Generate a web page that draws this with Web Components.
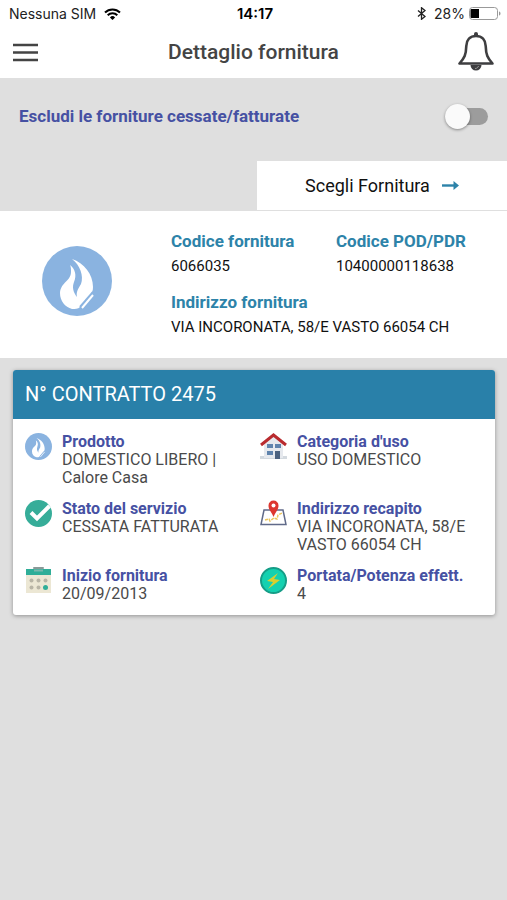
<!DOCTYPE html>
<html lang="it">
<head>
<meta charset="utf-8">
<meta name="viewport" content="width=device-width, initial-scale=1">
<title>Dettaglio fornitura</title>
<style>
  html { height: 100%; }
  body { margin: 0; min-height: 100%; background: #dfdfdf; font-family: Roboto, "Liberation Sans", sans-serif; color: #111; }
</style>
</head>
<body>
<supply-page></supply-page>

<script>
const flame = `
  <circle cx="35" cy="35" r="35" fill="#8ab3e0"/>
  <path fill="#fff" d="M30 13 C42 17 51 28 51 41 C51 45 50 47 47 50 L38 61 C36 63 33 63 30 63 C23 61 18 55 18 47 C19 36 29 35 29 26 C29 23 29 21 28 19 C33 23 35 29 32 36 C30 41 31 46 35 51 C34 46 36 43 39 38 C42 30 38 19 30 13 Z"/>
  <path d="M51 46 L38 61" stroke="#8ab3e0" stroke-width="2"/>
  <path d="M51 49 L40 62" stroke="#fff" stroke-width="2"/>
`

const icons = {
  flame: { box: '0 0 70 70', body: flame },
  check: { box: '0 0 27 27', body: `
    <circle cx="13.5" cy="13.5" r="13.5" fill="#36ad99"/>
    <path d="M6 12.5l6 6L24.5 6" fill="none" stroke="#fff" stroke-width="4"/>` },
  calendar: { box: '0 0 27 27', body: `
    <path fill="#ece7d4" d="M1 7h25v19H1z"/>
    <path fill="#2fae98" d="M1 2h25v6H1z"/>
    <rect x="8" y="0" width="11" height="2" rx="1" fill="#8a9a98"/>
    <path d="M9 3.5h9" stroke="#79b8ad" stroke-width="2"/>
    <g fill="#b9b5a6"><circle cx="6.5" cy="13.5" r="2"/><circle cx="13.5" cy="13.5" r="2"/><circle cx="20.5" cy="13.5" r="2"/><circle cx="6.5" cy="20.5" r="2"/><circle cx="13.5" cy="20.5" r="2"/></g>
    <circle cx="20.5" cy="20.5" r="2.5" fill="#2fae98"/>` },
  house: { box: '0 0 27 27', body: `
    <path fill="#d3d9df" d="M0 23h27v3H0z"/>
    <path fill="#e6e9ee" d="M4 11l9.5-9L23 11v14H4z"/>
    <path d="M1 12L13.5 2 26 12" fill="none" stroke="#b92b2f" stroke-width="3"/>
    <path fill="#5f83ad" d="M7 11h6v4H7zM15 11h6v4h-6zM7 18h6v4H7z"/>
    <path fill="#4b617f" d="M15 18h5v8h-5z"/>` },
  map: { box: '0 0 27 27', body: `
    <path d="M4 10h19l3 14.5H1z" fill="#fff" stroke="#606a89" stroke-width="1.5"/>
    <path d="M5 20l4-1 1 2 4-3 3 1 1-4 4-2" fill="none" stroke="#ecc55c" stroke-width="1.5" stroke-dasharray="3 1"/>
    <path fill="#dd3730" d="M13.5 17C11.5 12 8.5 10 8.5 5.5a5 5 0 0 1 10 0C18.5 10 15.5 12 13.5 17z"/>
    <circle cx="13.5" cy="5.5" r="2" fill="#fff"/>` },
  power: { box: '0 0 27 27', body: `
    <circle cx="13.5" cy="13.5" r="12.5" fill="#14d1b0" stroke="#169d87" stroke-width="2"/>
    <path fill="#d9cf2f" d="M18 6L7 14l6 1-5 7 12-9-6-1z"/>` },
  menu: { box: '0 0 25 19', body: '<path d="M0 2h25M0 9.5h25M0 17h25" stroke="#444" stroke-width="2.5"/>' },
  bell: { box: '0 0 36 40', body: `
    <path fill="#3e3e40" d="M18 0a2 2 0 0 1 2 2v3h-4V2a2 2 0 0 1 2-2zM12.5 33h11a5.5 5.5 0 0 1-11 0z"/>
    <path d="M18 4C12 4 8.5 8 8.3 14C8 23 6.5 26 1.5 31.5H34.5C29.5 26 28 23 27.7 14C27.5 8 24 4 18 4Z" fill="#fff" stroke="#3e3e40" stroke-width="2.6" stroke-linejoin="round"/>
    <path d="M17 36.5c2 0 3-1 3.5-2.5" stroke="#999" fill="none"/>` },
  arrow: { box: '0 0 17 9', body: '<path d="M0 4.5h13" stroke="#2d83a9" stroke-width="2.4"/><path fill="#2d83a9" d="M11.5 0L17 4.5 11.5 9z"/>' },
  wifi: { box: '0 0 17 12', body: `
    <path fill="none" stroke="#000" stroke-width="2" d="M1 4.5a10.6 10.6 0 0 1 15 0M3.7 7.3a6.8 6.8 0 0 1 9.6 0"/>
    <path d="M8.5 12L5.9 9.4a3.7 3.7 0 0 1 5.2 0z"/>` },
  bluetooth: { box: '0 0 9 13', body: '<path d="M1 3.5l7 6L4.5 12.3V.7L8 3.5l-7 6" fill="none" stroke="#222" stroke-width="1.3"/>' },
  battery: { box: '0 0 32 13', body: `
    <rect x=".5" y=".5" width="28" height="12" rx="3" fill="#fff" stroke="#999"/>
    <path d="M2.5 2H10v9H2.5a1 1 0 0 1-1-1V3a1 1 0 0 1 1-1z"/>
    <path fill="#999" d="M30 4.5c2 .5 2 3.5 0 4z"/>` },
}

class SupplyIcon extends HTMLElement {
  connectedCallback() {
    const icon = icons[this.getAttribute('name')]
    this.attachShadow({ mode: 'open' }).innerHTML = `
      <style>
        :host { display: block; flex: none; }
        svg { display: block; width: 100%; height: 100%; }
      </style>
      <svg viewBox="${icon.box}" aria-hidden="true">${icon.body}</svg>
    `
  }
}

class PhoneStatus extends HTMLElement {
  connectedCallback() {
    this.attachShadow({ mode: 'open' }).innerHTML = `
      <style>
        :host { display: grid; grid-template-columns: 1fr auto 1fr; align-items: center; height: 27px; padding: 0 6px 0 9px; background: #fff; font: 14px/20px Inter, sans-serif; color: #222; }
        div { display: flex; align-items: center; gap: 8px; }
        .right { justify-content: flex-end; gap: 4px; }
        .bt { width: 9px; height: 13px; margin-right: 4px; }
        .wifi { width: 17px; height: 12px; }
        .battery { width: 32px; height: 13px; }
        b { font-size: 15px; font-weight: 600; color: #000; }
      </style>
      <div><span>Nessuna SIM</span><supply-icon class="wifi" name="wifi"></supply-icon></div>
      <b>14:17</b>
      <div class="right">
        <supply-icon class="bt" name="bluetooth"></supply-icon>
        <span>28%</span>
        <supply-icon class="battery" name="battery"></supply-icon>
      </div>
    `
  }
}

class AppToolbar extends HTMLElement {
  connectedCallback() {
    this.attachShadow({ mode: 'open' }).innerHTML = `
      <style>
        :host { display: flex; align-items: center; justify-content: space-between; height: 50px; padding: 0 13px 1px; background: #fff; }
        button { display: flex; justify-content: center; width: 36px; padding: 0; border: 0; background: none; }
        .open supply-icon { width: 25px; height: 19px; }
        .open { justify-content: flex-start; }
        .alerts supply-icon { width: 36px; height: 40px; }
        h1 { margin: 0; font-size: 21px; line-height: 24px; font-weight: 500; color: #444; }
      </style>
      <button class="open" aria-label="Menu"><supply-icon name="menu"></supply-icon></button>
      <h1><slot></slot></h1>
      <button class="alerts" aria-label="Notifiche"><supply-icon name="bell"></supply-icon></button>
    `
  }
}

class FilterSwitch extends HTMLElement {
  connectedCallback() {
    this.attachShadow({ mode: 'open' }).innerHTML = `
      <style>
        :host { display: block; padding: 26px 19px 33px; }
        label { display: flex; align-items: center; justify-content: space-between; color: #4651a3; font-size: 17px; line-height: 24px; font-weight: 700; }
        input { appearance: none; display: flex; align-items: center; width: 43px; height: 17px; margin: 0; border-radius: 9px; background: #9c9c9c; }
        input::before { content: ""; width: 25px; height: 25px; border-radius: 50%; background: #fafafa; box-shadow: 0 1px 3px rgba(0,0,0,.4); }
        input:checked { justify-content: flex-end; background: #9aa2dc; }
      </style>
      <label for="exclude"><slot></slot><input id="exclude" type="checkbox" role="switch"></label>
    `
  }
}

class PickButton extends HTMLElement {
  connectedCallback() {
    this.attachShadow({ mode: 'open' }).innerHTML = `
      <style>
        :host { display: flex; justify-content: flex-end; padding-bottom: 1px; }
        button { display: flex; align-items: center; justify-content: center; gap: 12px; width: 250px; height: 49px; padding: 0; border: 0; background: #fff; font: inherit; font-size: 18px; color: #111; }
        supply-icon { width: 17px; height: 9px; }
      </style>
      <button><slot></slot><supply-icon name="arrow"></supply-icon></button>
    `
  }
}

class SupplyField extends HTMLElement {
  connectedCallback() {
    this.attachShadow({ mode: 'open' }).innerHTML = `
      <style>
        :host { display: block; }
        .label { font-size: 17px; line-height: 24px; font-weight: 700; color: #2d83a9; }
        .value { font-size: 15px; line-height: 27px; color: #111; }
      </style>
      <div class="label">${this.getAttribute('label')}</div>
      <div class="value"><slot></slot></div>
    `
  }
}

class SupplySummary extends HTMLElement {
  connectedCallback() {
    this.attachShadow({ mode: 'open' }).innerHTML = `
      <style>
        :host { display: flex; align-items: flex-start; padding: 18px 6px 17px 42px; background: #fff; }
        supply-icon { width: 70px; height: 70px; margin: 17px 59px 0 0; }
        .fields { flex: 1; display: grid; grid-template-columns: 1fr 1fr; row-gap: 10px; }
        ::slotted([wide]) { grid-column: 1 / -1; }
      </style>
      <supply-icon name="flame"></supply-icon>
      <div class="fields"><slot></slot></div>
    `
  }
}

class ContractItem extends HTMLElement {
  connectedCallback() {
    this.attachShadow({ mode: 'open' }).innerHTML = `
      <style>
        :host { display: flex; align-items: flex-start; gap: 10px; font-size: 16px; line-height: 18px; color: #4a4a4a; }
        supply-icon { width: 27px; height: 27px; }
        .label { font-weight: 700; color: #4651a3; }
      </style>
      <supply-icon name="${this.getAttribute('icon')}"></supply-icon>
      <div>
        <div class="label">${this.getAttribute('label')}</div>
        <slot></slot>
      </div>
    `
  }
}

class ContractCard extends HTMLElement {
  connectedCallback() {
    this.attachShadow({ mode: 'open' }).innerHTML = `
      <style>
        :host { display: block; margin: 12px 12px 0 13px; border-radius: 3px; overflow: hidden; background: #fff; box-shadow: 0 1px 4px rgba(0,0,0,.35); }
        h2 { margin: 0; padding: 12px; background: #2980a9; color: #fff; font-size: 20px; line-height: 25px; font-weight: 400; }
        .items { display: grid; grid-template-columns: 1fr 1fr; row-gap: 13px; padding: 14px 0 12px 12px; }
      </style>
      <h2>${this.getAttribute('heading')}</h2>
      <div class="items"><slot></slot></div>
    `
  }
}

class SupplyPage extends HTMLElement {
  connectedCallback() {
    this.attachShadow({ mode: 'open' }).innerHTML = `
      <style>:host { display: block; }</style>
      <phone-status></phone-status>
      <app-toolbar>Dettaglio fornitura</app-toolbar>
      <filter-switch>Escludi le forniture cessate/fatturate</filter-switch>
      <pick-button>Scegli Fornitura</pick-button>
      <supply-summary>
        <supply-field label="Codice fornitura">6066035</supply-field>
        <supply-field label="Codice POD/PDR">10400000118638</supply-field>
        <supply-field wide label="Indirizzo fornitura">VIA INCORONATA, 58/E VASTO 66054 CH</supply-field>
      </supply-summary>
      <contract-card heading="N° CONTRATTO 2475">
        <contract-item icon="flame" label="Prodotto">DOMESTICO LIBERO | Calore Casa</contract-item>
        <contract-item icon="house" label="Categoria d'uso">USO DOMESTICO</contract-item>
        <contract-item icon="check" label="Stato del servizio">CESSATA FATTURATA</contract-item>
        <contract-item icon="map" label="Indirizzo recapito">VIA INCORONATA, 58/E VASTO 66054 CH</contract-item>
        <contract-item icon="calendar" label="Inizio fornitura">20/09/2013</contract-item>
        <contract-item icon="power" label="Portata/Potenza effett.">4</contract-item>
      </contract-card>
    `
  }
}

customElements.define('supply-icon', SupplyIcon)
customElements.define('phone-status', PhoneStatus)
customElements.define('app-toolbar', AppToolbar)
customElements.define('filter-switch', FilterSwitch)
customElements.define('pick-button', PickButton)
customElements.define('supply-field', SupplyField)
customElements.define('supply-summary', SupplySummary)
customElements.define('contract-item', ContractItem)
customElements.define('contract-card', ContractCard)
customElements.define('supply-page', SupplyPage)
</script>
</body>
</html>
